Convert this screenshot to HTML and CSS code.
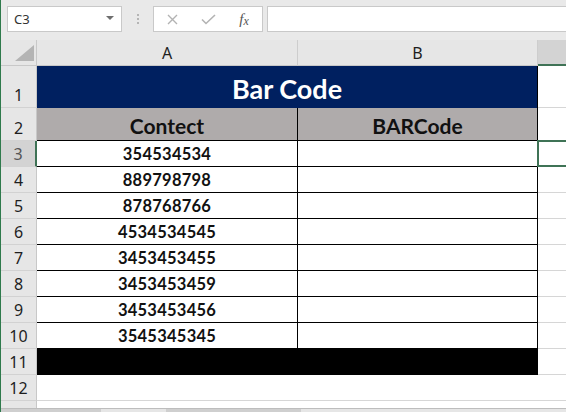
FILE: index.html
```html
<!DOCTYPE html>
<html>
<head>
<meta charset="utf-8">
<link rel="stylesheet" href="styles.css">
</head>
<body>
<div class="app">
  <div class="fbar">
    <div class="namebox"><span class="ref">C3</span><span class="dd"></span></div>
    <div class="grip"><i></i><i></i><i></i></div>
    <div class="fxbtns">
      <span class="btn"><svg width="11" height="11" viewBox="0 0 11 11"><path d="M1 1L10 10M10 1L1 10" stroke="#b3b3b3" stroke-width="1.4" fill="none"/></svg></span>
      <span class="btn"><svg width="15" height="11" viewBox="0 0 15 11"><path d="M1 5.5L5 9.5L14 1" stroke="#b3b3b3" stroke-width="1.6" fill="none"/></svg></span>
      <span class="btn fx"><i>f</i><i class="sub">x</i></span>
    </div>
    <div class="finput"></div>
  </div>
  <div class="sheet">
    <div class="corner"><span class="tri"></span></div>
    <div class="ch">A</div>
    <div class="ch">B</div>
    <div class="ch selcol"></div>

    <div class="rh">1</div>
    <div class="cell title">Bar Code</div>
    <div class="cell grid"></div>

    <div class="rh">2</div>
    <div class="cell head colA">Contect</div>
    <div class="cell head colB">BARCode</div>
    <div class="cell grid"></div>

    <div class="rh selrow">3</div>
    <div class="cell data colA">354534534</div>
    <div class="cell data colB"></div>
    <div class="cell grid active"></div>

    <div class="rh">4</div>
    <div class="cell data colA">889798798</div>
    <div class="cell data colB"></div>
    <div class="cell grid"></div>

    <div class="rh">5</div>
    <div class="cell data colA">878768766</div>
    <div class="cell data colB"></div>
    <div class="cell grid"></div>

    <div class="rh">6</div>
    <div class="cell data colA">4534534545</div>
    <div class="cell data colB"></div>
    <div class="cell grid"></div>

    <div class="rh">7</div>
    <div class="cell data colA">3453453455</div>
    <div class="cell data colB"></div>
    <div class="cell grid"></div>

    <div class="rh">8</div>
    <div class="cell data colA">3453453459</div>
    <div class="cell data colB"></div>
    <div class="cell grid"></div>

    <div class="rh">9</div>
    <div class="cell data colA">3453453456</div>
    <div class="cell data colB"></div>
    <div class="cell grid"></div>

    <div class="rh">10</div>
    <div class="cell data colA">3545345345</div>
    <div class="cell data colB"></div>
    <div class="cell grid"></div>

    <div class="rh">11</div>
    <div class="cell black"></div>
    <div class="cell grid"></div>

    <div class="rh">12</div>
    <div class="cell grid"></div>
    <div class="cell grid"></div>
    <div class="cell grid"></div>

    <div class="rh">13</div>
    <div class="cell grid"></div>
    <div class="cell grid"></div>
    <div class="cell grid"></div>
  </div>
  <div class="hscroll"><span class="bar1"></span><span class="bar2"></span></div>
</div>
</body>
</html>
```

FILE: styles.css
```css
* { box-sizing: border-box; }
html, body { margin: 0; padding: 0; }
body {
  width: 566px;
  height: 412px;
  overflow: hidden;
  background: #e8e8e8;
  font-family: "Noto Sans", "Open Sans", sans-serif;
}
.app {
  width: 566px;
  height: 412px;
  display: flex;
  flex-direction: column;
  border-left: 1px solid #2f7a4c;
  overflow: hidden;
}
.fbar {
  height: 40px;
  flex: none;
  display: flex;
  align-items: flex-start;
  padding: 6px 0 0 6px;
  background: #e9e9e9;
}
.namebox {
  width: 115px;
  height: 26px;
  flex: none;
  background: #fff;
  border: 1px solid #c9c9c9;
  display: flex;
  align-items: center;
  justify-content: space-between;
  padding: 0 7px 0 6px;
}
.ref { font-size: 13px; color: #333; }
.dd {
  width: 0; height: 0;
  border-left: 4px solid transparent;
  border-right: 4px solid transparent;
  border-top: 4px solid #6e6e6e;
  margin-top: -2px;
}
.grip {
  width: 31px;
  height: 26px;
  flex: none;
  display: flex;
  flex-direction: column;
  align-items: center;
  justify-content: center;
  gap: 2px;
}
.grip i { width: 2px; height: 2px; background: #b5b5b5; display: block; }
.fxbtns {
  width: 110px;
  height: 26px;
  flex: none;
  background: #fff;
  border: 1px solid #c9c9c9;
  display: grid;
  grid-template-columns: 36px 36px 36px;
  align-items: center;
  justify-items: center;
}
.btn { display: flex; align-items: center; justify-content: center; }
.fx {
  font-family: "Liberation Serif", serif;
  color: #555;
  font-size: 15px;
}
.fx .sub { font-size: 12px; margin-top: 4px; }
.finput {
  margin-left: 4px;
  flex: 1;
  height: 26px;
  background: #fff;
  border: 1px solid #c9c9c9;
  border-right: none;
}
.sheet {
  flex: 1;
  overflow: hidden;
  display: grid;
  grid-template-columns: 36px 261px 240px 28px;
  grid-template-rows: 26px 42px 33px repeat(11, 26px);
  background: #fff;
}
.corner {
  background: #e6e6e6;
  border-right: 1px solid #c8c8c8;
  border-bottom: 1px solid #c8c8c8;
  display: flex;
  align-items: flex-end;
  justify-content: flex-end;
  padding: 0 2px 4px 0;
}
.tri {
  width: 0; height: 0;
  border-left: 19px solid transparent;
  border-bottom: 16px solid #b4b4b4;
}
.ch {
  background: #e6e6e6;
  border-right: 1px solid #cdcdcd;
  border-bottom: 1px solid #c8c8c8;
  display: flex;
  align-items: center;
  justify-content: center;
  font-size: 16px;
  color: #1e1e1e;
  padding-top: 1px;
}
.ch.selcol {
  background: #d3d3d3;
  border-right: none;
  border-bottom: 2px solid #3f7356;
}
.rh {
  background: #e6e6e6;
  border-right: 1px solid #c8c8c8;
  border-bottom: 1px solid #d2d2d2;
  display: flex;
  align-items: flex-end;
  justify-content: center;
  padding-bottom: 2px;
  font-size: 16px;
  color: #1e1e1e;
  line-height: 20px;
}
.rh.selrow {
  background: #d3d3d3;
  border-right: 2px solid #3f7356;
  color: #555;
}
.cell {
  display: flex;
  align-items: center;
  justify-content: center;
  font-family: "Lato", "Noto Sans", sans-serif;
  font-weight: 700;
  color: #111;
}
.grid {
  border-bottom: 1px solid #d6d6d6;
}
.title {
  grid-column: span 2;
  background: #002060;
  color: #fff;
  font-size: 27px;
  border-right: 1px solid #000;
  padding-top: 2px;
}
.head {
  background: #afabab;
  font-size: 21px;
  border-bottom: 1px solid #000;
  padding-top: 2px;
}
.colA { border-right: 1px solid #000; }
.colB { border-right: 1px solid #000; }
.data {
  font-size: 16.5px;
  letter-spacing: 0.25px;
  border-bottom: 1px solid #000;
  padding-top: 1px;
}
.black {
  grid-column: span 2;
  background: #000;
}
.active {
  position: relative;
}
.active::after {
  content: "";
  position: absolute;
  left: -1px;
  top: -1px;
  right: -4px;
  bottom: -1px;
  border: 2px solid #3f7356;
}
.hscroll {
  height: 4px;
  flex: none;
  background: #e6e6e6;
  border-top: 1px solid #bdbdbd;
  display: flex;
  align-items: flex-start;
}
.bar1 { width: 100px; height: 3px; background: #cfcfcf; display: block; }
.bar2 { width: 135px; height: 3px; background: #cfcfcf; display: block; margin-left: 65px; }
```
